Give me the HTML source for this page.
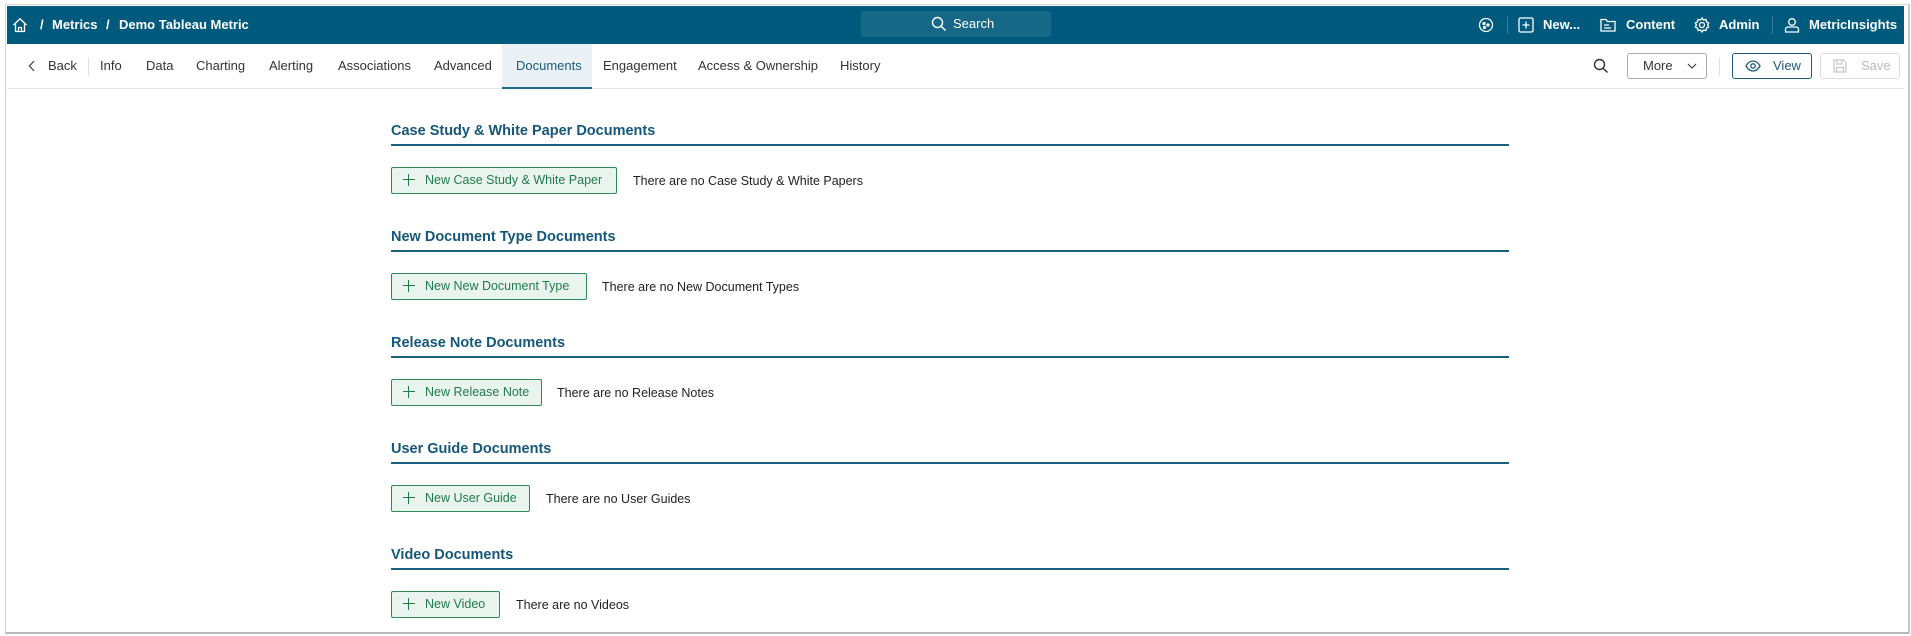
<!DOCTYPE html>
<html><head><meta charset="utf-8"><style>
*{box-sizing:border-box;margin:0;padding:0}
body{width:1911px;height:636px;background:#fff;font-family:"Liberation Sans",sans-serif;position:relative;overflow:hidden}
.frame{position:absolute;left:5px;top:4px;width:1905px;height:630px;border:1px solid #d6d6d6;border-right:2px solid #c8c8c8;border-bottom:2px solid #b8b8b8}
.hdr{position:absolute;left:7px;top:6px;width:1897px;height:38px;background:#005a7d;color:#fff;font-size:13px;font-weight:bold}
.a{position:absolute;top:0;line-height:38px;white-space:nowrap}
.ic{position:absolute}
.srch{position:absolute;left:854px;top:5px;width:190px;height:26px;background:#166887;border-radius:3px;font-weight:normal;font-size:13px}
.sep{position:absolute;width:1px;background:#3b7d98;top:10px;height:18px}
.tabs{position:absolute;left:7px;top:44px;width:1897px;height:45px;border-bottom:1px solid #e3e3e3;font-size:13px;color:#333}
.t{position:absolute;top:0;line-height:44px;white-space:nowrap}
.act{position:absolute;left:495px;top:0;width:90px;height:45px;background:#eaf1f4;border-bottom:2px solid #1a6a8a}
.btn{position:absolute;height:26px;border:1px solid #c8c8c8;border-radius:3px;font-size:13px;line-height:24px;white-space:nowrap}
.sec h2{position:absolute;left:391px;font-size:14.5px;color:#14577a;font-weight:bold;white-space:nowrap}
.line{position:absolute;left:391px;width:1118px;height:1.5px;background:#1c5f80}
.nb{position:absolute;left:391px;height:27px;border:1px solid #2f8a5a;background:#e9f4ee;border-radius:2px;color:#217a4c;font-size:12.5px;line-height:25px;padding-left:33px;white-space:nowrap}
.nb:before{content:"";position:absolute;left:11px;top:6px;width:12px;height:12px;background:linear-gradient(#217a4c,#217a4c) center/1.3px 12px no-repeat,linear-gradient(#217a4c,#217a4c) center/12px 1.3px no-repeat}
.nt{position:absolute;font-size:12.5px;color:#222;white-space:nowrap}
</style></head><body>
<div class="frame"></div>
<div class="hdr">
 <svg class="ic" style="left:5px;top:11px" width="16" height="16" viewBox="0 0 16 16" fill="none" stroke="#fff" stroke-width="1.3"><path d="M1.5 8L8 1.8 14.5 8M3.5 6.3V14.5h9V6.3M6.5 14.5v-4h3v4"/></svg>
 <span class="a" style="left:33px">/</span>
 <span class="a" style="left:45px">Metrics</span>
 <span class="a" style="left:99px">/</span>
 <span class="a" style="left:112px">Demo Tableau Metric</span>
 <div class="srch">
  <svg class="ic" style="left:70px;top:5px" width="16" height="16" viewBox="0 0 16 16" fill="none" stroke="#fff" stroke-width="1.4"><circle cx="6.5" cy="6.5" r="5"/><path d="M10.2 10.2L14.5 14.5"/></svg>
  <span style="position:absolute;left:92px;top:0;line-height:26px">Search</span>
 </div>
 <svg class="ic" style="left:1471px;top:11px" width="16" height="16" viewBox="0 0 16 16" fill="none" stroke="#fff" stroke-width="1.3"><circle cx="8" cy="8" r="6.5"/><circle cx="6" cy="6.5" r="1" fill="#fff"/><circle cx="10" cy="8" r="1" fill="#fff"/><circle cx="6.5" cy="10.5" r="1" fill="#fff"/></svg>
 <div class="sep" style="left:1500px"></div>
 <svg class="ic" style="left:1511px;top:11px" width="16" height="16" viewBox="0 0 16 16" fill="none" stroke="#fff" stroke-width="1.3"><rect x="1" y="1" width="14" height="14" rx="1.5"/><path d="M8 4.5v7M4.5 8h7"/></svg>
 <span class="a" style="left:1536px">New...</span>
 <svg class="ic" style="left:1593px;top:11px" width="16" height="16" viewBox="0 0 16 16" fill="none" stroke="#fff" stroke-width="1.3"><path d="M1 2.5h5l1.5 2H15V14H1z M4 8h5M4 11h7"/></svg>
 <span class="a" style="left:1619px">Content</span>
 <svg class="ic" style="left:1687px;top:11px" width="16" height="16" viewBox="0 0 16 16" fill="none" stroke="#fff" stroke-width="1.3"><circle cx="8" cy="8" r="2.5"/><path d="M8 1l1.5 2 2.4-.6.6 2.4 2.2 1.2L13.6 8l1.1 2-2.2 1.2-.6 2.4-2.4-.6L8 15l-1.5-2-2.4.6-.6-2.4L1.3 10l1.1-2-1.1-2 2.2-1.2.6-2.4 2.4.6z"/></svg>
 <span class="a" style="left:1712px">Admin</span>
 <div class="sep" style="left:1765px"></div>
 <svg class="ic" style="left:1777px;top:11px" width="16" height="16" viewBox="0 0 16 16" fill="none" stroke="#fff" stroke-width="1.3"><circle cx="8" cy="5" r="3.3"/><path d="M1.5 15v-2.5c0-1.5 1-2.5 2.5-2.5h8c1.5 0 2.5 1 2.5 2.5V15z"/></svg>
 <span class="a" style="left:1802px">MetricInsights</span>
</div>
<div class="tabs">
 <div class="act"></div>
 <svg class="ic" style="left:21px;top:16px" width="8" height="12" viewBox="0 0 8 12" fill="none" stroke="#444" stroke-width="1.3"><path d="M6 1L1.5 6 6 11"/></svg>
 <span class="t" style="left:41px">Back</span>
 <div style="position:absolute;left:81px;top:14px;width:1px;height:18px;background:#e0e0e0"></div>
 <span class="t" style="left:93px">Info</span>
 <span class="t" style="left:139px">Data</span>
 <span class="t" style="left:189px">Charting</span>
 <span class="t" style="left:262px">Alerting</span>
 <span class="t" style="left:331px">Associations</span>
 <span class="t" style="left:427px">Advanced</span>
 <span class="t" style="left:509px;color:#1a5a7a">Documents</span>
 <span class="t" style="left:596px">Engagement</span>
 <span class="t" style="left:691px">Access &amp; Ownership</span>
 <span class="t" style="left:833px">History</span>
 <svg class="ic" style="left:1586px;top:14px" width="16" height="16" viewBox="0 0 16 16" fill="none" stroke="#333" stroke-width="1.4"><circle cx="6.5" cy="6.5" r="5"/><path d="M10.2 10.2L14.5 14.5"/></svg>
 <div class="btn" style="left:1620px;top:9px;width:80px;color:#333;border-color:#aaa;padding-left:15px">More <svg style="position:absolute;left:59px;top:9px" width="10" height="6" viewBox="0 0 10 6" fill="none" stroke="#444" stroke-width="1.2"><path d="M1 1l4 4 4-4"/></svg></div>
 <div style="position:absolute;left:1712px;top:14px;width:1px;height:18px;background:#e0e0e0"></div>
 <div class="btn" style="left:1725px;top:9px;width:80px;color:#1a5a7a;border-color:#1a5a7a;padding-left:40px"><svg style="position:absolute;left:12px;top:5px" width="16" height="14" viewBox="0 0 16 14" fill="none" stroke="#1a5a7a" stroke-width="1.3"><path d="M1 7c2-3.5 4.5-5 7-5s5 1.5 7 5c-2 3.5-4.5 5-7 5S3 10.5 1 7z"/><circle cx="8" cy="7" r="2.2"/></svg>View</div>
 <div class="btn" style="left:1813px;top:9px;width:80px;color:#bbb;border-color:#ddd;padding-left:40px"><svg style="position:absolute;left:12px;top:5px" width="14" height="14" viewBox="0 0 14 14" fill="none" stroke="#c8c8c8" stroke-width="1.2"><path d="M1 1h9.5L13 3.5V13H1z M4 1v4h5V1 M3.5 13V8.5h7V13"/></svg>Save</div>
</div>
<div class="sec">
 <h2 style="top:123px">Case Study &amp; White Paper Documents</h2><div class="line" style="top:144px"></div>
 <div class="nb" style="top:167px;width:226px">New Case Study &amp; White Paper</div><span class="nt" style="left:633px;top:174px">There are no Case Study &amp; White Papers</span>
 <h2 style="top:229px">New Document Type Documents</h2><div class="line" style="top:250px"></div>
 <div class="nb" style="top:273px;width:196px">New New Document Type</div><span class="nt" style="left:602px;top:280px">There are no New Document Types</span>
 <h2 style="top:335px">Release Note Documents</h2><div class="line" style="top:356px"></div>
 <div class="nb" style="top:379px;width:151px">New Release Note</div><span class="nt" style="left:557px;top:386px">There are no Release Notes</span>
 <h2 style="top:441px">User Guide Documents</h2><div class="line" style="top:462px"></div>
 <div class="nb" style="top:485px;width:139px">New User Guide</div><span class="nt" style="left:546px;top:492px">There are no User Guides</span>
 <h2 style="top:547px">Video Documents</h2><div class="line" style="top:568px"></div>
 <div class="nb" style="top:591px;width:109px">New Video</div><span class="nt" style="left:516px;top:598px">There are no Videos</span>
</div>
</body></html>
